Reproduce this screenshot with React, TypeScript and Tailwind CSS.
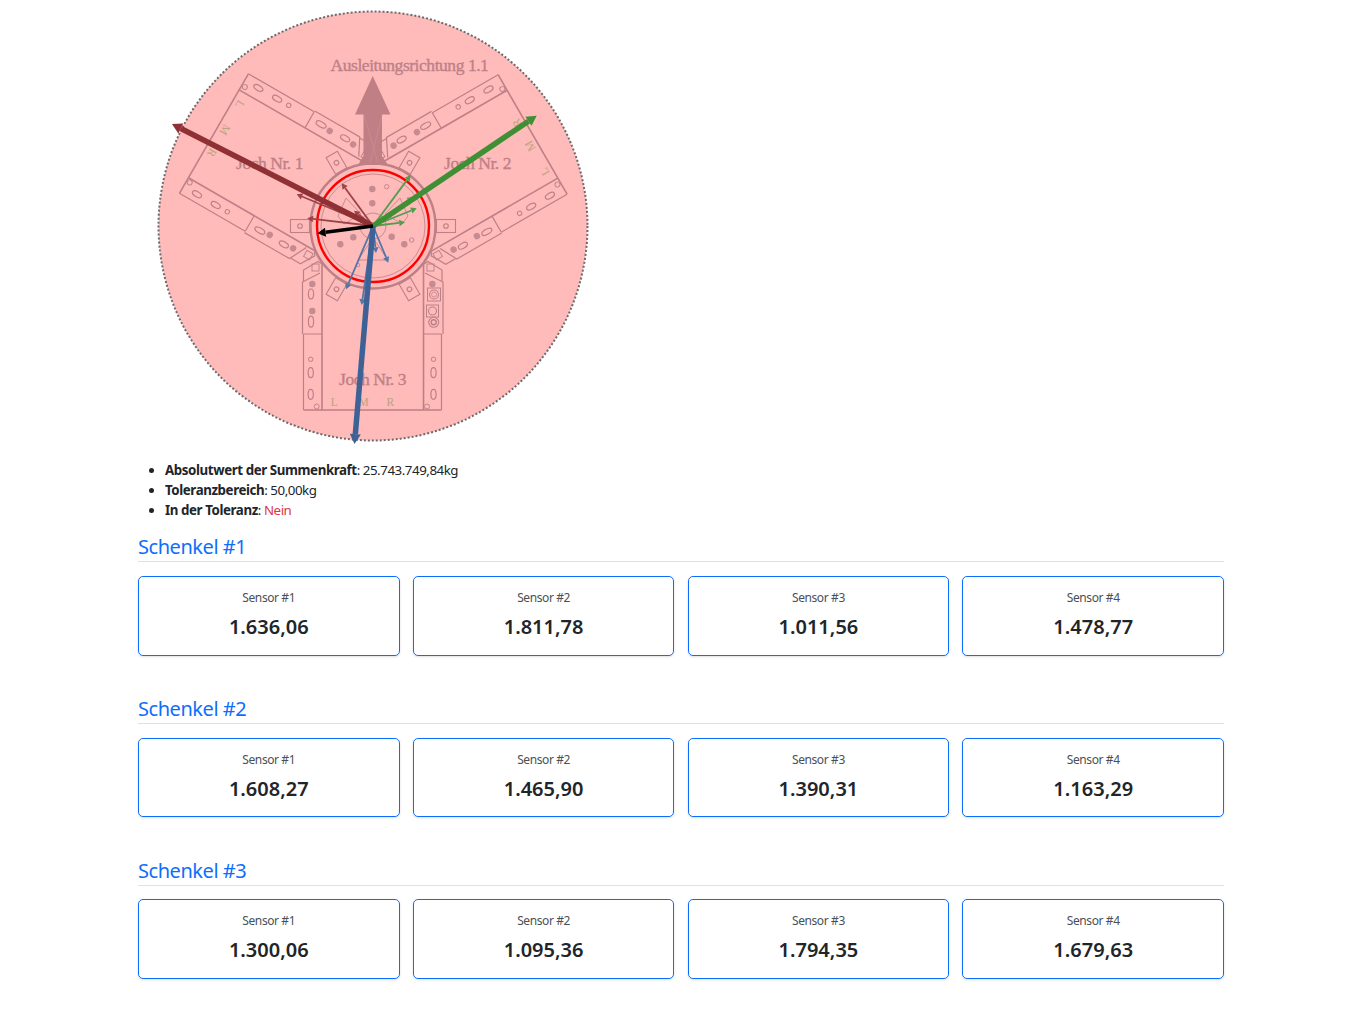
const sections = [
  { title: "Schenkel #1", values: ["1.636,06", "1.811,78", "1.011,56", "1.478,77"] },
  { title: "Schenkel #2", values: ["1.608,27", "1.465,90", "1.390,31", "1.163,29"] },
  { title: "Schenkel #3", values: ["1.300,06", "1.095,36", "1.794,35", "1.679,63"] },
];

const LINE = "#bd8086";
const CX = 373;
const CY = 226;

const Dot = ({ x, y, r = 3.2 }: { x: number; y: number; r?: number }) => (
  <circle cx={x} cy={y} r={r} fill="#c58b90" stroke="none" />
);

const Oval = ({ x, y, ry = 5 }: { x: number; y: number; ry?: number }) => (
  <ellipse cx={x} cy={y} rx={2.6} ry={ry} strokeWidth="1.2" />
);

// drawn pointing down (Joch 3), the other two are the same group rotated
const Yoke = ({ rotate, fittings }: { rotate: number; fittings?: boolean }) => (
  <g transform={`rotate(${rotate} ${CX} ${CY})`} fill="none" stroke={LINE}>
    <path d="M322 262V410M423.5 262V410M303.5 410H441.5" strokeWidth="1.6" />
    <path d="M303.5 334V410M441.5 334V410M303.5 334H322M423.5 334H441.5" strokeWidth="1.2" />
    <path d="M302.5 334V282L320 273M443 334V282L425 273" strokeWidth="1.2" />
    <path d="M303.5 281V270L318 261.5L322 264M442 281V270L428 261.5L424 264" strokeWidth="1.2" />
    <rect x="312" y="264" width="7" height="7" strokeWidth="0.9" />
    <rect x="427" y="264" width="7" height="7" strokeWidth="0.9" />
    <circle cx="316.7" cy="406.5" r="2.5" strokeWidth="0.9" />
    <circle cx="427" cy="406.5" r="2.5" strokeWidth="0.9" />

    <circle cx="310.7" cy="359.3" r="2.2" strokeWidth="1" />
    <Oval x={310.7} y={372.7} />
    <Oval x={310.7} y={394.3} />
    <Dot x={312.3} y={284} />
    <Oval x={311} y={294} />
    <Dot x={312.3} y={311} />
    <Oval x={311} y={321.7} ry={5.5} />

    <circle cx="433.5" cy="359.3" r="2.2" strokeWidth="1" />
    <Oval x={433.5} y={372.7} />
    <Oval x={433.5} y={394.3} />
    <Dot x={432.3} y={284} />
    {fittings ? (
      <>
        <rect x="427.5" y="288" width="13" height="13" strokeWidth="1" />
        <circle cx="434" cy="294.5" r="4.5" strokeWidth="1.1" />
        <circle cx="434" cy="294.5" r="2.5" strokeWidth="0.7" />
        <rect x="426.5" y="305" width="12" height="12" strokeWidth="1" />
        <circle cx="432.5" cy="311" r="4" strokeWidth="1.1" />
        <circle cx="433.7" cy="322.3" r="5" strokeWidth="1.1" />
        <circle cx="433.7" cy="322.3" r="2.5" strokeWidth="1.4" />
      </>
    ) : (
      <>
        <Oval x={433.5} y={294} />
        <Dot x={432.3} y={311} />
        <Oval x={433.5} y={321.7} ry={5.5} />
      </>
    )}

    <g fontFamily="'Liberation Serif', serif" fill="#bba37f" stroke="none" fontSize="11.5" textAnchor="middle">
      <text x="334" y="406">L</text>
      <text x="363.5" y="406">M</text>
      <text x="390" y="406">R</text>
    </g>
  </g>
);

const Arrow = ({
  x,
  y,
  color,
  width = 1.8,
  head = 3.2,
}: {
  x: number;
  y: number;
  color: string;
  width?: number;
  head?: number;
}) => {
  const dx = x - CX;
  const dy = y - CY;
  const len = Math.hypot(dx, dy);
  const ux = dx / len;
  const uy = dy / len;
  const bx = x - ux * head * 1.8;
  const by = y - uy * head * 1.8;
  return (
    <g>
      <line x1={CX} y1={CY} x2={bx} y2={by} stroke={color} strokeWidth={width} />
      <polygon
        points={`${x},${y} ${bx - uy * head},${by + ux * head} ${bx + uy * head},${by - ux * head}`}
        fill={color}
      />
    </g>
  );
};

const ForceDiagram = () => (
  <svg viewBox="138 0 470 452" width="470" height="452" className="block">
    <circle cx={CX} cy={CY} r="214.5" fill="#ffbaba" stroke="#6b6b6b" strokeWidth="2" strokeDasharray="2 2" />

    {/* tabs around the hub */}
    {[0, 60, 120, 180, 240, 300].map((a) => (
      <g key={a} transform={`rotate(${a} ${CX} ${CY})`} fill="none" stroke={LINE} strokeWidth="1.1">
        <rect x={CX - 82.5} y={CY - 6.5} width="19" height="13" />
        <circle cx={CX - 73} cy={CY} r="2.3" />
      </g>
    ))}

    <Yoke rotate={0} fittings />
    <Yoke rotate={120} />
    <Yoke rotate={-120} />

    {/* hub */}
    <g fill="none" stroke={LINE}>
      <circle cx={CX} cy={CY} r="62.5" strokeWidth="2.4" fill="#ffbaba" />
      <circle cx={CX} cy={CY} r="52" strokeWidth="0.8" />
      <circle cx={CX} cy={CY} r="13" strokeWidth="0.8" />
      <path d="M346 198L338 216L344 224L361 214ZM400 198L408 216L402 224L385 214ZM358 260H388L373 238Z" strokeWidth="0.8" />
      <circle cx="386.7" cy="186.7" r="2.2" strokeWidth="0.9" />
      <circle cx="411.7" cy="240" r="2.2" strokeWidth="0.9" />
      <circle cx="358" cy="265" r="1.8" strokeWidth="0.8" />
    </g>
    <Dot x={372.3} y={189} />
    <Dot x={372.3} y={203.3} />
    <Dot x={340.3} y={244.3} />
    <Dot x={353.3} y={237.3} />
    <Dot x={391.7} y={236.7} />
    <Dot x={404.3} y={244.3} />

    {/* direction arrow */}
    <polygon points="372.7,76 390.5,114.5 382,114.5 382,156 388,165 358,165 363.5,156 363.5,114.5 355,114.5" fill="#bf7f85" />
    <path d="M364 115L378 163M382 115L370 163" stroke="#cc9196" strokeWidth="0.6" />

    <g fontFamily="'Liberation Serif', serif" fill="#bd8086" stroke="#bd8086" strokeWidth="0.35" textAnchor="middle" fontSize="17.5" letterSpacing="-0.45">
      <text x="409.5" y="71">Ausleitungsrichtung 1.1</text>
      <text x="269.5" y="169">Joch Nr. 1</text>
      <text x="477.5" y="169">Joch Nr. 2</text>
      <text x="372.5" y="385">Joch Nr. 3</text>
    </g>

    <circle cx={CX} cy={CY} r="56" fill="none" stroke="#ff0000" strokeWidth="2.4" />

    <Arrow x={296.7} y={194.3} color="#9c4348" />
    <Arrow x={307.3} y={218.3} color="#9c4348" />
    <Arrow x={341.7} y={183.3} color="#9c4348" />
    <Arrow x={354} y={210.7} color="#9c4348" />
    <Arrow x={172} y={124} color="#8f3035" width={5.5} head={5.5} />

    <Arrow x={410.7} y={175} color="#589b50" />
    <Arrow x={416.7} y={208.3} color="#589b50" />
    <Arrow x={405} y={222.3} color="#589b50" />
    <Arrow x={413} y={197} color="#6fa35e" />
    <Arrow x={536.7} y={115.7} color="#3f9035" width={5.5} head={5.5} />

    <Arrow x={346} y={289.3} color="#5476a6" />
    <Arrow x={361.7} y={305} color="#5476a6" />
    <Arrow x={376} y={253} color="#5476a6" />
    <Arrow x={388.3} y={262.7} color="#5476a6" />
    <Arrow x={354.5} y={444} color="#3e6296" width={5.5} head={5.5} />

    <Arrow x={317.5} y={233.3} color="#000000" width={3.4} head={4.5} />
  </svg>
);

const App = () => {
  return (
    <div className="min-h-[1016px] bg-white pr-[124px] pl-[138px] text-[13.3px] leading-5 tracking-[-0.45px] text-[#212529] font-['Noto_Sans',sans-serif]">
      <ForceDiagram />

      <ul className="mt-2 list-disc pl-[27px]">
        <li>
          <strong className="font-bold tracking-[-0.4px]">Absolutwert der Summenkraft</strong>: 25.743.749,84kg
        </li>
        <li>
          <strong className="font-bold tracking-[-0.4px]">Toleranzbereich</strong>: 50,00kg
        </li>
        <li>
          <strong className="font-bold tracking-[-0.4px]">In der Toleranz</strong>: <span className="text-[#dc3545]">Nein</span>
        </li>
      </ul>

      <div className="mt-[12.45px]">
        {sections.map((section) => (
          <section key={section.title} className="h-[161.6px]">
            <h4 className="h-[30px] border-b border-[#dee2e6] text-xl leading-[29px] tracking-[-0.45px] text-[#0d6efd]">
              {section.title}
            </h4>
            <div className="mt-[13.8px] grid grid-cols-4 gap-[13.3px]">
              {section.values.map((value, index) => (
                <div
                  key={index}
                  className="flex h-[79.5px] flex-col items-center rounded-[5px] border border-[#0d6efd] pt-[12px] shadow-sm"
                >
                  <p className="text-xs leading-[18px] tracking-[-0.4px] text-[#495057]">Sensor #{index + 1}</p>
                  <p className="mt-2 text-xl leading-[24px] tracking-normal font-semibold">{value}</p>
                </div>
              ))}
            </div>
          </section>
        ))}
      </div>
    </div>
  );
};

export default App;
